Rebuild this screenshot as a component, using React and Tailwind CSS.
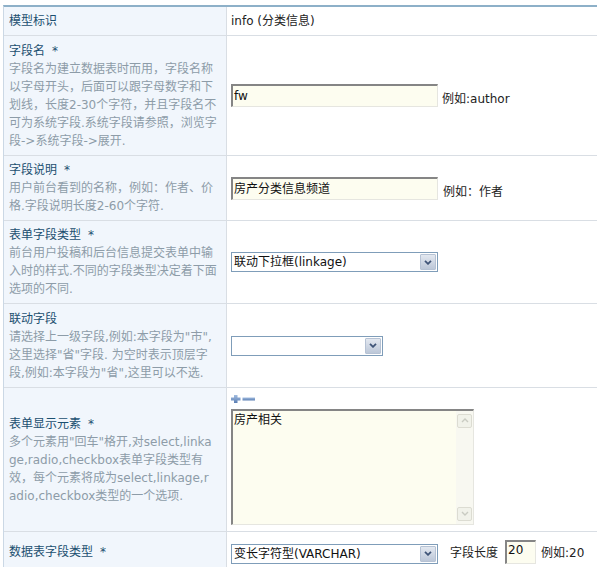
import React from "react";

const font = { fontFamily: '"DejaVu Sans", "Noto Sans CJK SC", sans-serif' };

const Chevron = () => (
  <svg width="8" height="5" viewBox="0 0 8 5">
    <path d="M1 0.8 L4 3.8 L7 0.8" fill="none" stroke="#3f5478" strokeWidth="1.8" />
  </svg>
);

const FakeSelect = ({ className, text }) => (
  <div className={`h-[20px] border border-[#7f9db9] bg-white flex items-center ${className}`}>
    <span className="flex-1 pl-[2px] text-[12px] leading-[16px] text-[#111] whitespace-nowrap">{text}</span>
    <div className="w-[16px] h-[16px] mr-[1px] flex items-center justify-center rounded-[1px] border border-[#b6c2d4] bg-gradient-to-b from-[#e3e8f0] to-[#bcc7d8]">
      <Chevron />
    </div>
  </div>
);

const Title = ({ children, star }) => (
  <div className="text-[#1b4f70] whitespace-nowrap">
    {children}
    {star && <span className="ml-[7px]">*</span>}
  </div>
);

const Desc = ({ lines }) => (
  <div className="text-[#8d9ca8]">
    {lines.map((l, i) => (
      <div key={i} className="whitespace-nowrap">{l}</div>
    ))}
  </div>
);

const Row = ({ h, left, children }) => (
  <div className={`flex border-b border-[#d9dee4] ${h}`}>
    <div className="w-[223px] shrink-0 bg-[#f1f6fc] border-r border-[#d9dee4] pl-[5px] flex flex-col justify-center leading-[18px] text-[12px]">
      {left}
    </div>
    <div className="flex-1 pl-[4px] flex items-center">{children}</div>
  </div>
);

const TextInput = ({ className, value }) => (
  <div className={`border-t-2 border-l-2 border-b border-r border-t-[#858585] border-l-[#858585] border-b-[#e6e6e0] border-r-[#e6e6e0] bg-[#fdfdf0] pl-[1px] text-[12px] text-[#111] flex items-center ${className}`}>
    {value}
  </div>
);

const Hint = ({ children }) => (
  <span className="text-[12px] leading-[16px] text-[#222] whitespace-nowrap">{children}</span>
);

const ScrollBtn = ({ up }) => (
  <div className="w-[15px] h-[14px] border border-[#dcdcd2] rounded-[2px] bg-[#f1f2ea] flex items-center justify-center">
    <svg width="8" height="5" viewBox="0 0 8 5">
      <path d={up ? "M1 4 L4 1 L7 4" : "M1 1 L4 4 L7 1"} fill="none" stroke="#c9cbc2" strokeWidth="1.4" />
    </svg>
  </div>
);

export default function App() {
  return (
    <div className="w-[597px] h-[567px] bg-white overflow-hidden text-[12px]" style={font}>
      <div className="mt-[5px] ml-[3px] border-t-2 border-[#8db0c8] border-l border-l-[#cbd8e5]">
        <Row h="h-[29px]" left={<Title>模型标识</Title>}>
          <span className="text-[#222]">info (分类信息)</span>
        </Row>

        <Row
          h="h-[120px]"
          left={
            <>
              <Title star>字段名</Title>
              <Desc
                lines={[
                  "字段名为建立数据表时而用，字段名称",
                  "以字母开头，后面可以跟字母数字和下",
                  "划线，长度2-30个字符，并且字段名不",
                  "可为系统字段.系统字段请参照，浏览字",
                  "段->系统字段->展开.",
                ]}
              />
            </>
          }
        >
          <div className="flex items-end gap-[4px]">
            <TextInput className="w-[207px] h-[23px]" value="fw" />
            <Hint>例如:author</Hint>
          </div>
        </Row>

        <Row
          h="h-[65px]"
          left={
            <>
              <Title star>字段说明</Title>
              <Desc lines={["用户前台看到的名称，例如：作者、价", "格.字段说明长度2-60个字符."]} />
            </>
          }
        >
          <div className="flex items-end gap-[5px]">
            <TextInput className="w-[207px] h-[23px]" value="房产分类信息频道" />
            <Hint>例如：作者</Hint>
          </div>
        </Row>

        <Row
          h="h-[83px]"
          left={
            <>
              <Title star>表单字段类型</Title>
              <Desc
                lines={["前台用户投稿和后台信息提交表单中输", "入时的样式.不同的字段类型决定着下面", "选项的不同."]}
              />
            </>
          }
        >
          <FakeSelect className="w-[207px]" text="联动下拉框(linkage)" />
        </Row>

        <Row
          h="h-[84px]"
          left={
            <>
              <Title>联动字段</Title>
              <Desc
                lines={[
                  '请选择上一级字段,例如:本字段为"市",',
                  '这里选择"省"字段. 为空时表示顶层字',
                  '段,例如:本字段为"省",这里可以不选.',
                ]}
              />
            </>
          }
        >
          <FakeSelect className="w-[152px]" text="" />
        </Row>

        <Row
          h="h-[144px]"
          left={
            <>
              <Title star>表单显示元素</Title>
              <Desc
                lines={[
                  '多个元素用"回车"格开,对select,linka',
                  "ge,radio,checkbox表单字段类型有",
                  "效，每个元素将成为select,linkage,r",
                  "adio,checkbox类型的一个选项.",
                ]}
              />
            </>
          }
        >
          <div className="flex flex-col gap-[6px]">
            <svg width="25" height="8" viewBox="0 0 25 8">
              <defs>
                <linearGradient id="pm" x1="0" y1="0" x2="0" y2="1">
                  <stop offset="0" stopColor="#a3bde0" />
                  <stop offset="1" stopColor="#5a7eb3" />
                </linearGradient>
              </defs>
              <path d="M3 0 H6.5 V2.5 H9.5 V5.5 H6.5 V8 H3 V5.5 H0 V2.5 H3 Z" fill="url(#pm)" />
              <rect x="11.5" y="2.5" width="12.5" height="3" fill="url(#pm)" />
            </svg>
            <div className="w-[243px] h-[116px] flex border-t-2 border-l-2 border-b border-r border-t-[#858585] border-l-[#858585] border-b-[#e6e6e0] border-r-[#e6e6e0] bg-[#fdfdf0]">
              <div className="flex-1 pl-[1px] pt-[1px] leading-[16px] text-[12px] text-[#111]">房产相关</div>
              <div className="w-[17px] flex flex-col justify-between items-center py-[3px] bg-[#f8f8f1]">
                <ScrollBtn up />
                <ScrollBtn />
              </div>
            </div>
          </div>
        </Row>

        <Row h="h-[40px]" left={<Title star>数据表字段类型</Title>}>
          <div className="flex items-end">
            <FakeSelect className="w-[207px]" text="变长字符型(VARCHAR)" />
            <span className="ml-[12px] mb-[2px]">
              <Hint>字段长度</Hint>
            </span>
            <TextInput className="ml-[7px] w-[31px] h-[24px] !items-start pt-[1px] leading-[14px]" value="20" />
            <span className="ml-[5px] mb-[2px]">
              <Hint>例如:20</Hint>
            </span>
          </div>
        </Row>
      </div>
    </div>
  );
}
